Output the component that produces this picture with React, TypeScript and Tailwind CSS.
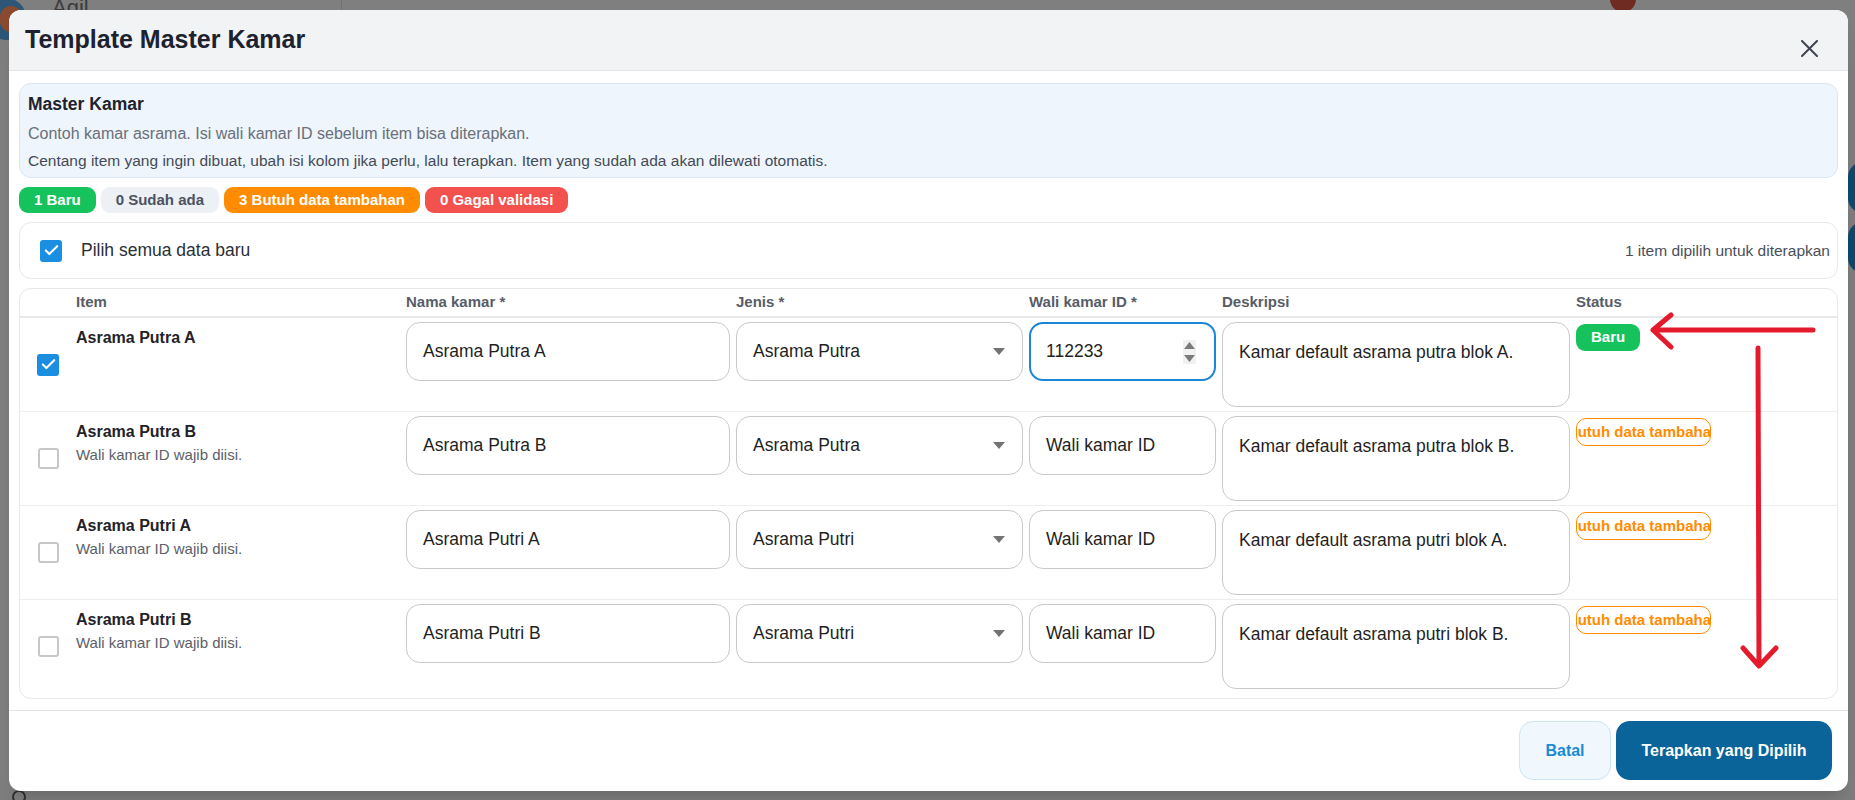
import { Check } from "lucide-react";

interface TemplateRow {
  id: number;
  item: string;
  note: string;
  checked: boolean;
  nama: string;
  jenis: string;
  wali: string;
  focused: boolean;
  deskripsi: string;
  status: "baru" | "butuh";
}

const rows: TemplateRow[] = [
  {
    id: 1,
    item: "Asrama Putra A",
    note: "",
    checked: true,
    nama: "Asrama Putra A",
    jenis: "Asrama Putra",
    wali: "112233",
    focused: true,
    deskripsi: "Kamar default asrama putra blok A.",
    status: "baru",
  },
  {
    id: 2,
    item: "Asrama Putra B",
    note: "Wali kamar ID wajib diisi.",
    checked: false,
    nama: "Asrama Putra B",
    jenis: "Asrama Putra",
    wali: "Wali kamar ID",
    focused: false,
    deskripsi: "Kamar default asrama putra blok B.",
    status: "butuh",
  },
  {
    id: 3,
    item: "Asrama Putri A",
    note: "Wali kamar ID wajib diisi.",
    checked: false,
    nama: "Asrama Putri A",
    jenis: "Asrama Putri",
    wali: "Wali kamar ID",
    focused: false,
    deskripsi: "Kamar default asrama putri blok A.",
    status: "butuh",
  },
  {
    id: 4,
    item: "Asrama Putri B",
    note: "Wali kamar ID wajib diisi.",
    checked: false,
    nama: "Asrama Putri B",
    jenis: "Asrama Putri",
    wali: "Wali kamar ID",
    focused: false,
    deskripsi: "Kamar default asrama putri blok B.",
    status: "butuh",
  },
];

function Checkbox({ checked }: { checked: boolean }) {
  return checked ? (
    <div className="w-[22px] h-[22px] rounded-[3px] bg-[#1a8fe2] flex items-center justify-center">
      <Check className="w-[17px] h-[17px] text-white" strokeWidth={3} />
    </div>
  ) : (
    <div className="w-[21px] h-[21px] rounded-[3px] border-2 border-[#c7c7c7] bg-white" />
  );
}

function RowView({ row }: { row: TemplateRow }) {
  return (
    <div className="grid grid-cols-[56px_330px_330px_293px_193px_354px_1fr] pt-[4px] pb-[4px] border-b border-[#eceef0] last:border-b-0">
      <div className="flex items-center justify-center">
        <Checkbox checked={row.checked} />
      </div>
      <div className="pt-[5px]">
        <p className="text-[16px] leading-[22px] font-bold text-[#1f2329]">{row.item}</p>
        {row.note && (
          <p className="mt-[1px] text-[15px] leading-[22px] text-[#5b606a]">{row.note}</p>
        )}
      </div>
      <div className="pr-[6px]">
        <div className="h-[59px] rounded-[14px] border border-[#c9c9c9] flex items-center px-[16px] text-[17.5px] text-[#1f1f1f]">
          {row.nama}
        </div>
      </div>
      <div className="pr-[6px]">
        <div className="h-[59px] rounded-[14px] border border-[#c9c9c9] flex items-center justify-between pl-[16px] pr-[17px] text-[17.5px] text-[#1f1f1f]">
          <span>{row.jenis}</span>
          <svg width="12" height="7" viewBox="0 0 12 7">
            <path d="M0 0 L12 0 L6 7 Z" fill="#737373" />
          </svg>
        </div>
      </div>
      <div className="pr-[6px]">
        {row.focused ? (
          <div className="h-[59px] rounded-[14px] border-2 border-[#1b87d7] flex items-center justify-between pl-[15px] pr-[18px] text-[17.5px] text-[#1f1f1f]">
            <span>{row.wali}</span>
            <div className="w-[13px] h-[24px] bg-[#f1f1f1] flex flex-col items-center justify-center gap-[6px]">
              <svg width="11" height="7" viewBox="0 0 11 7">
                <path d="M0 7 L11 7 L5.5 0 Z" fill="#7b7b7b" />
              </svg>
              <svg width="11" height="7" viewBox="0 0 11 7">
                <path d="M0 0 L11 0 L5.5 7 Z" fill="#7b7b7b" />
              </svg>
            </div>
          </div>
        ) : (
          <div className="h-[59px] rounded-[14px] border border-[#c9c9c9] flex items-center px-[16px] text-[17.5px] text-[#1f1f1f]">
            {row.wali}
          </div>
        )}
      </div>
      <div className="pr-[6px]">
        <div className="h-[85px] rounded-[14px] border border-[#c9c9c9] px-[16px] pt-[17px] text-[17.5px] leading-[24px] text-[#1f1f1f]">
          {row.deskripsi}
        </div>
      </div>
      <div className="pt-[2px]">
        {row.status === "baru" ? (
          <span className="inline-flex items-center h-[27px] px-[15px] rounded-[9px] bg-[#16c25b] text-white text-[15px] font-bold">
            Baru
          </span>
        ) : (
          <div className="w-[135px] h-[28px] rounded-[10px] border border-[#ff8c00] bg-white flex items-center justify-center overflow-hidden whitespace-nowrap text-[#ff8c00] text-[15px] font-bold">
            Butuh data tambahan
          </div>
        )}
      </div>
    </div>
  );
}

export default function App() {
  return (
    <div
      className="relative w-[1855px] h-[800px] overflow-hidden bg-[#7f7f7f]"
      style={{ fontFamily: '"Liberation Sans", Arial, sans-serif' }}
    >
      {/* page behind the overlay */}
      <div className="absolute left-[-14px] top-[-2px] w-[40px] h-[42px] rounded-full bg-[#2e5676] overflow-hidden">
        <div className="ml-[14px] mt-[8px] w-[22px] h-[26px] rounded-full bg-[#8a4a30]" />
      </div>
      <div className="absolute left-[52px] top-[-9px] text-[22px] text-[#3c3c3c]">Agil</div>
      <div className="absolute left-[341px] top-0 w-px h-[12px] bg-[#727272]" />
      <div className="absolute left-[1610px] top-[-14px] w-[26px] h-[26px] rounded-full bg-[#6f2a22]" />
      <div className="absolute left-[1848px] top-[162px] w-[30px] h-[51px] rounded-full bg-[#0c4a71]" />
      <div className="absolute left-[1848px] top-[222px] w-[30px] h-[51px] rounded-full bg-[#0c4a71]" />
      <div className="absolute left-[12px] top-[790px] w-[14px] h-[14px] rounded-full border-2 border-[#333]" />

      {/* modal */}
      <div className="relative ml-[9px] mt-[10px] w-[1839px] bg-white rounded-[12px] overflow-hidden shadow-xl">
        <div className="h-[61px] bg-[#f2f3f5] border-b border-[#e3e5e8] flex items-center justify-between pl-[16px] pr-[30px]">
          <h1 className="text-[25px] font-bold text-[#1c2230]">Template Master Kamar</h1>
          <svg className="mt-[17px]" width="17" height="17" viewBox="0 0 17 17">
            <path d="M1 1 L16 16 M16 1 L1 16" stroke="#3e4350" strokeWidth="2" strokeLinecap="round" />
          </svg>
        </div>

        <div className="px-[10px] pt-[12px] pb-[11px]">
          <div className="rounded-[12px] border border-[#dbe5ef] bg-[#eef5fd] px-[8px] pt-[8px] pb-[5px]">
            <p className="text-[17.5px] leading-[24px] font-bold text-[#1d222c]">Master Kamar</p>
            <p className="mt-[6px] text-[16px] leading-[24px] text-[#6a6f78]">
              Contoh kamar asrama. Isi wali kamar ID sebelum item bisa diterapkan.
            </p>
            <p className="mt-[4px] text-[15.5px] leading-[22px] font-medium text-[#454b55]">
              Centang item yang ingin dibuat, ubah isi kolom jika perlu, lalu terapkan. Item yang sudah ada akan dilewati otomatis.
            </p>
          </div>

          <div className="mt-[9px] flex gap-[5px] text-[15px] font-bold">
            <span className="h-[26px] px-[15px] rounded-[9px] bg-[#16c25b] text-white flex items-center">1 Baru</span>
            <span className="h-[26px] px-[15px] rounded-[9px] bg-[#edf0f5] text-[#4b5260] flex items-center">0 Sudah ada</span>
            <span className="h-[26px] px-[15px] rounded-[9px] bg-[#ff8c00] text-white flex items-center">3 Butuh data tambahan</span>
            <span className="h-[26px] px-[15px] rounded-[9px] bg-[#f2514d] text-white flex items-center">0 Gagal validasi</span>
          </div>

          <div className="mt-[9px] h-[57px] rounded-[12px] border border-[#e6e8eb] flex items-center justify-between pl-[20px] pr-[7px]">
            <div className="flex items-center gap-[19px]">
              <Checkbox checked />
              <span className="text-[17.5px] text-[#2b2f36]">Pilih semua data baru</span>
            </div>
            <span className="text-[15.5px] text-[#4a4f57]">1 item dipilih untuk diterapkan</span>
          </div>

          <div className="mt-[9px] rounded-[12px] border border-[#e6e8eb] pb-[5px]">
            <div className="grid grid-cols-[56px_330px_330px_293px_193px_354px_1fr] h-[29px] items-center border-b-2 border-[#e6e8eb] text-[15px] font-bold text-[#575d67]">
              <span />
              <span>Item</span>
              <span>Nama kamar *</span>
              <span>Jenis *</span>
              <span>Wali kamar ID *</span>
              <span>Deskripsi</span>
              <span>Status</span>
            </div>
            {rows.map((row) => (
              <RowView key={row.id} row={row} />
            ))}
          </div>
        </div>

        <div className="border-t border-[#e3e5e8] flex justify-end gap-[5px] pt-[10px] pb-[11px] pr-[16px]">
          <button className="w-[92px] h-[59px] rounded-[14px] border border-[#cbe5f4] bg-[#f0f8fd] text-[16px] font-bold text-[#1b8ad6]">
            Batal
          </button>
          <button className="w-[216px] h-[59px] rounded-[14px] bg-[#0a6399] text-[16px] font-bold text-white">
            Terapkan yang Dipilih
          </button>
        </div>
      </div>

      {/* red annotation arrows */}
      <svg className="absolute inset-0 pointer-events-none" width="1855" height="800" viewBox="0 0 1855 800">
        <g stroke="#e41b2d" strokeWidth="5" strokeLinecap="round" strokeLinejoin="round" fill="none">
          <path d="M1813 330 L1653 330 M1671 315 L1653 330 L1671 347" />
          <path d="M1758 348 L1759 666 M1743 648 L1759 666 L1776 648" />
        </g>
      </svg>
    </div>
  );
}
